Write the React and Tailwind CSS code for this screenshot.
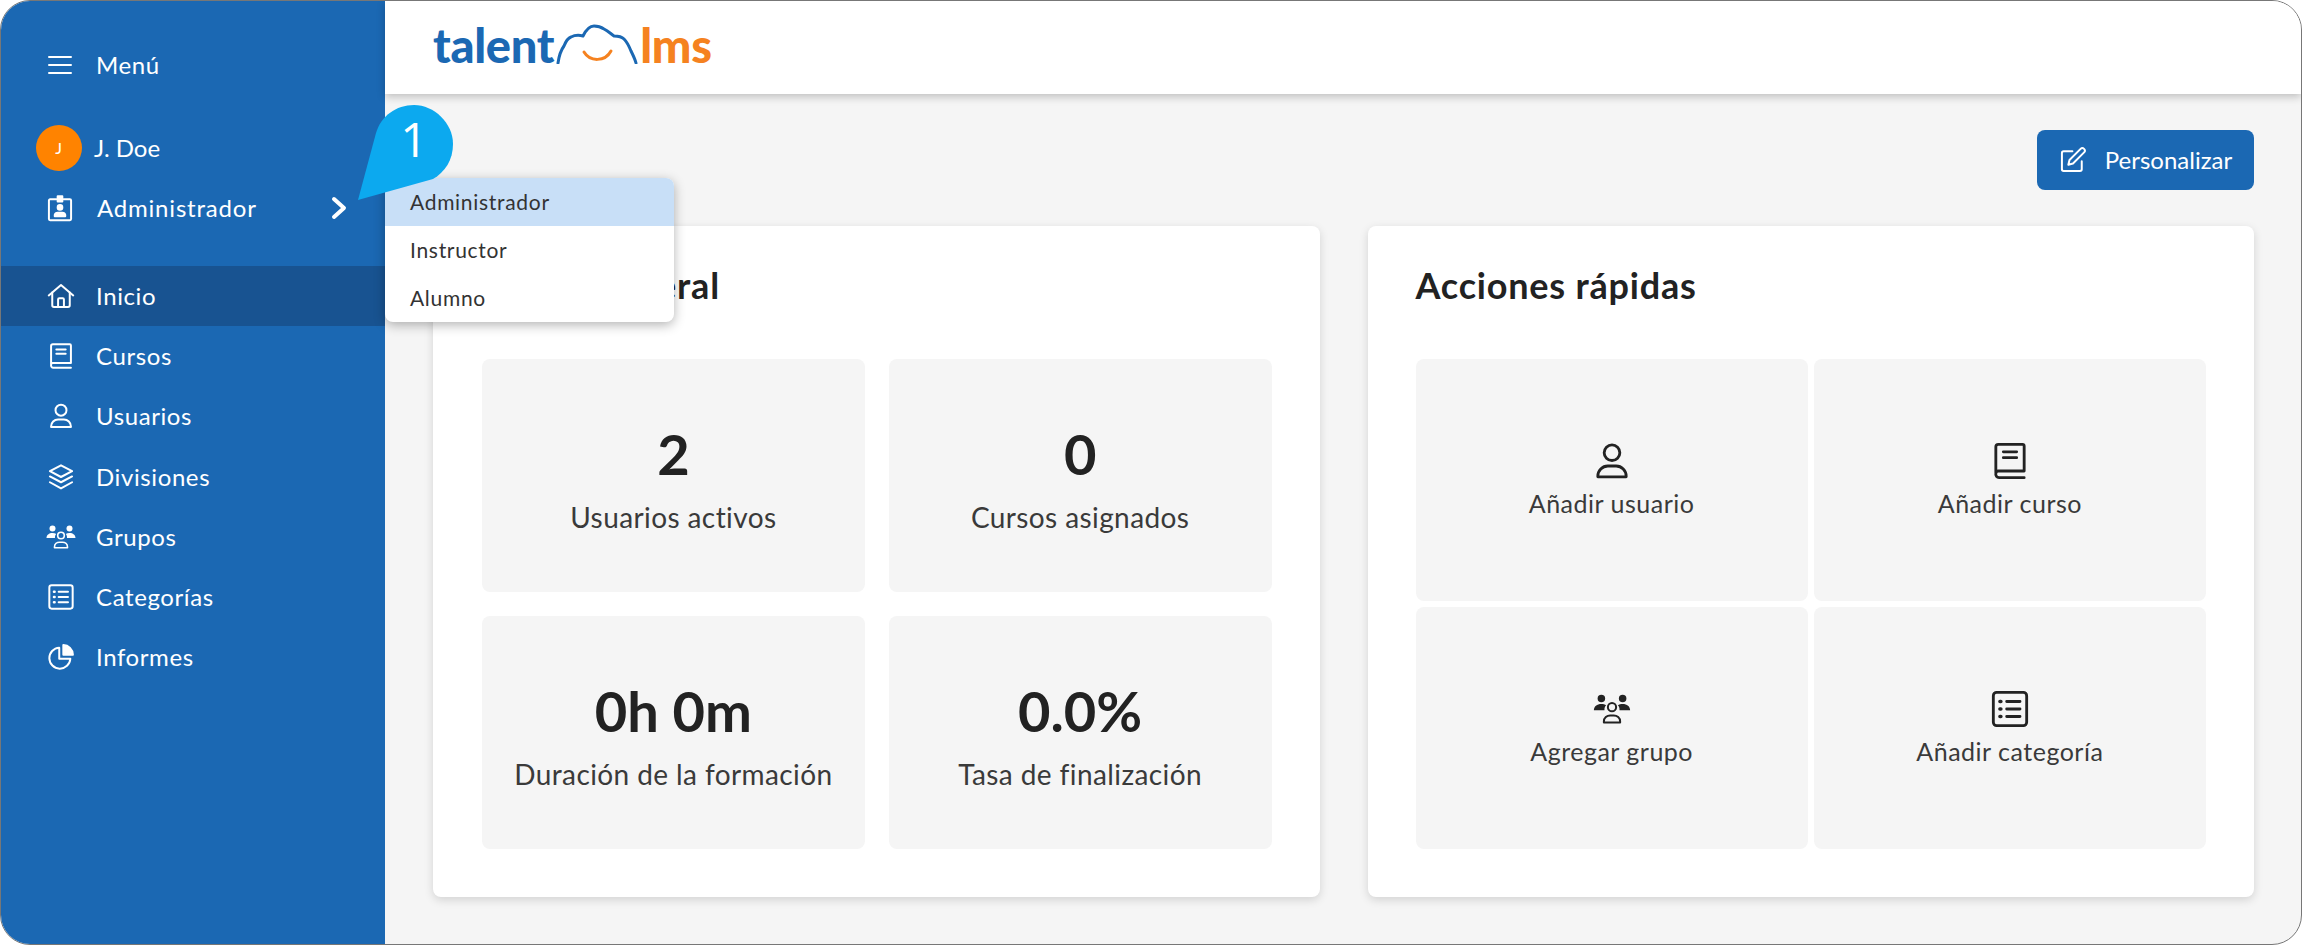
import { useState } from 'react';

const font = { fontFamily: 'Lato, "Noto Sans", sans-serif' };

const IconBase = ({ children, className = 'w-[28px] h-[28px]' }) => (
  <svg viewBox="0 0 24 24" fill="none" stroke="currentColor" strokeWidth="1.7" strokeLinecap="round" strokeLinejoin="round" className={className}>
    {children}
  </svg>
);

const HomeIcon = (p) => (
  <IconBase {...p}>
    <path d="M1.500 11.500 12 2.500l10.500 9" />
    <path d="M4.500 9V20a1.500 1.500 0 0 0 1.500 1.500h12a1.500 1.500 0 0 0 1.500-1.500V9" />
    <path d="M9.500 21.500V15a1 1 0 0 1 1-1h3a1 1 0 0 1 1 1v6.500" />
  </IconBase>
);
const BookIcon = (p) => (
  <IconBase {...p}>
    <path d="M3.500 19V3.500A1.500 1.500 0 0 1 5 2h14.500a1 1 0 0 1 1 1v15H5a1.500 1.500 0 0 0-1.500 1.500A2 2 0 0 0 5.500 22h15" />
    <path d="M8 6.500h8M8 10h8" />
  </IconBase>
);
const UserIcon = (p) => (
  <IconBase {...p}>
    <circle cx="12" cy="7" r="4.700" />
    <path d="M3.500 21.500v-.5A6 6 0 0 1 9.500 15h5a6 6 0 0 1 6 6v.5z" />
  </IconBase>
);
const LayersIcon = (p) => (
  <IconBase {...p}>
    <path d="M12 2 21.500 7 12 12 2.500 7z" />
    <path d="M2.500 11.500 12 16.500l9.500-5" />
    <path d="M2.500 16.500 12 21.800l9.500-5.300" />
  </IconBase>
);
const GroupIcon = ({ className = 'w-[30px] h-[24px]' }) => (
  <svg viewBox="0 0 30 24" fill="currentColor" className={className}>
    <circle cx="6.500" cy="3.500" r="3" />
    <circle cx="23.500" cy="3.500" r="3" />
    <path d="M0.500 13c0-3 2.500-5 6-5 1.500 0 2.800.4 3.800 1-1 1-1.500 2.500-1.300 4z" />
    <path d="M29.500 13c0-3-2.500-5-6-5-1.500 0-2.800.4-3.800 1 1 1 1.500 2.500 1.300 4z" />
    <circle cx="15" cy="10.500" r="3.300" fill="none" stroke="currentColor" strokeWidth="1.600" />
    <path d="M8.500 22.800v-.8c0-3 2.500-4.800 5-4.800h3c2.500 0 5 1.800 5 4.800v.8z" fill="none" stroke="currentColor" strokeWidth="1.600" strokeLinejoin="round" />
  </svg>
);
const ListIcon = (p) => (
  <IconBase {...p}>
    <rect x="2" y="2" width="20" height="20" rx="2" />
    <path d="M10 7.500h8M10 12h8M10 16.500h8" />
    <path d="M6 7.500h.5M6 12h.5M6 16.500h.5" strokeWidth="2.200" />
  </IconBase>
);
const PieIcon = (p) => (
  <IconBase {...p}>
    <path d="M10.500 4a9 9 0 1 0 9.500 9.500h-9.500z" />
    <path d="M14 1.800a8.500 8.500 0 0 1 8.200 8.200H14z" fill="currentColor" />
  </IconBase>
);
const BadgeIcon = (p) => (
  <IconBase {...p}>
    <path d="M9 4.500H3.500a1 1 0 0 0-1 1v16a1 1 0 0 0 1 1h17a1 1 0 0 0 1-1v-16a1 1 0 0 0-1-1H15" />
    <path d="M10 2h4v4.500h-4z" fill="currentColor" />
    <circle cx="12" cy="11.500" r="2" fill="currentColor" />
    <path d="M7.500 19v-1a2.500 2.500 0 0 1 2.500-2h4a2.500 2.500 0 0 1 2.500 2v1z" fill="currentColor" />
  </IconBase>
);
const EditIcon = (p) => (
  <IconBase {...p}>
    <path d="M11.500 4.500H4a1.500 1.500 0 0 0-1.500 1.500v14A1.500 1.500 0 0 0 4 21.500h14a1.500 1.500 0 0 0 1.500-1.500v-7" />
    <path d="M18.500 2.500a2.100 2.100 0 0 1 3 3L12 15l-4 1 1-4z" />
  </IconBase>
);

const Logo = () => (
  <div className="flex items-end h-[40px] leading-none" style={font}>
    <span className="text-[47px] font-black tracking-[-0.3px] text-[#1b68b3] leading-[38px]">talent</span>
    <svg viewBox="0 0 82 40" className="w-[82px] h-[40px] mx-[2px]" fill="none" strokeLinecap="round" strokeLinejoin="round">
      <path d="M2 39c1-7 3-13 6-17 2-5 4-8 7-9 4-2 8-2 12-1C30 6 34 2 38 2c4 0 7 1 10 3 4 2 7 5 10 7 4 0 8 1 10 3 3 3 5 7 7 12 2 4 4 8 5 12" stroke="#1b68b3" strokeWidth="3" />
      <path d="M28 28c6 10 21 10 27-1" stroke="#f58220" strokeWidth="3" />
    </svg>
    <span className="text-[47px] font-black tracking-[-0.3px] text-[#f58220] leading-[38px]">lms</span>
  </div>
);

const navItems = [
  { label: 'Inicio', icon: HomeIcon, active: true },
  { label: 'Cursos', icon: BookIcon },
  { label: 'Usuarios', icon: UserIcon },
  { label: 'Divisiones', icon: LayersIcon },
  { label: 'Grupos', icon: GroupIcon },
  { label: 'Categorías', icon: ListIcon },
  { label: 'Informes', icon: PieIcon },
];

const stats = [
  { value: '2', label: 'Usuarios activos' },
  { value: '0', label: 'Cursos asignados' },
  { value: '0h 0m', label: 'Duración de la formación' },
  { value: '0.0%', label: 'Tasa de finalización' },
];

const actions = [
  { label: 'Añadir usuario', icon: UserIcon },
  { label: 'Añadir curso', icon: BookIcon },
  { label: 'Agregar grupo', icon: GroupIcon },
  { label: 'Añadir categoría', icon: ListIcon },
];

const Sidebar = () => (
  <aside className="w-[384px] shrink-0 bg-[#1b68b3] text-white flex flex-col text-[24px] tracking-[0.6px]">
    <div className="h-[64px] mt-[32px] flex items-center pl-[47px] gap-[24px]">
      <svg viewBox="0 0 24 20" className="w-[24px] h-[20px]" stroke="currentColor" strokeWidth="2" strokeLinecap="round">
        <path d="M1 2h22M1 10h22M1 18h22" />
      </svg>
      <span>Menú</span>
    </div>
    <div className="mt-[28px] flex items-center pl-[35px] gap-[12px] h-[46px]">
      <div className="w-[46px] h-[46px] rounded-full bg-[#ff8300] flex items-center justify-center text-[16px]">J</div>
      <span className="tracking-[0px]">J. Doe</span>
    </div>
    <div className="mt-[14px] h-[46px] flex items-center pl-[45px] pr-[38px]">
      <BadgeIcon />
      <span className="ml-[23px] tracking-[0.8px]">Administrador</span>
      <svg viewBox="0 0 16 24" className="ml-auto w-[16px] h-[24px]" fill="none" stroke="currentColor" strokeWidth="4" strokeLinecap="round" strokeLinejoin="round">
        <path d="M3 3l10 9-10 9" />
      </svg>
    </div>
    <nav className="mt-[35px]">
      {navItems.map(({ label, icon: Icon, active }) => (
        <div key={label} className={`h-[60.200px] flex items-center ${active ? 'bg-[#185391]' : ''}`}>
          <div className="w-[95px] flex justify-center pl-[24px]"><Icon /></div>
          <span>{label}</span>
        </div>
      ))}
    </nav>
  </aside>
);

const StatTile = ({ value, label }) => (
  <div className="bg-[#f5f5f5] rounded-[8px] flex flex-col items-center justify-center pt-[2px]">
    <div className="text-[56px] font-bold leading-[70px] text-[#222]">{value}</div>
    <div className="text-[28px] leading-[36px] text-[#3a3a3a] tracking-[0.4px] mt-[10px]">{label}</div>
  </div>
);

const ActionTile = ({ label, icon: Icon }) => (
  <div className="bg-[#f5f5f5] rounded-[8px] flex flex-col items-center justify-center text-[#222]">
    <Icon className={Icon === GroupIcon ? 'w-[38px] h-[30px] my-[5px]' : 'w-[40px] h-[40px]'} />
    <div className="text-[25px] leading-[32px] text-[#3a3a3a] tracking-[0.5px] mt-[6px]">{label}</div>
  </div>
);

export default function App() {
  const [role] = useState('Administrador');

  return (
    <div className="w-[2302px] h-[945px] bg-white overflow-hidden" style={font}>
      <div className="relative w-full h-full flex overflow-hidden rounded-[30px] border border-[#777] bg-[#f5f5f5]">
        <Sidebar />
        <main className="flex-1 flex flex-col min-w-0">
          <header className="h-[93px] bg-white shadow-[0_3px_8px_rgba(0,0,0,0.22)] flex items-center pl-[48px] pb-[8px] shrink-0">
            <Logo />
          </header>
          <div className="flex-1 pl-[48px] pr-[47px] pt-[36px]">
            <div className="flex justify-end">
              <button className="w-[217px] h-[60px] bg-[#1b68b3] text-white rounded-[8px] flex items-center justify-center gap-[18px] text-[24px]">
                <EditIcon />
                Personalizar
              </button>
            </div>
            <div className="mt-[36px] grid grid-cols-2 gap-[48px] h-[671px]">
              <section className="bg-white rounded-[8px] shadow-[0_3px_10px_rgba(0,0,0,0.14)] pl-[49px] pr-[48px] py-[48px] flex flex-col">
                <h2 className="text-[36px] font-bold text-[#222] tracking-[0.8px] leading-[40px] mt-[-9px] mb-[54px]">Visión general</h2>
                <div className="flex-1 grid grid-cols-2 gap-[24px]">
                  {stats.map((s) => <StatTile key={s.label} {...s} />)}
                </div>
              </section>
              <section className="bg-white rounded-[8px] shadow-[0_3px_10px_rgba(0,0,0,0.14)] p-[48px] flex flex-col">
                <h2 className="text-[36px] font-bold text-[#222] tracking-[0.8px] leading-[40px] mt-[-9px] mb-[54px]">Acciones rápidas</h2>
                <div className="flex-1 grid grid-cols-2 gap-[6px]">
                  {actions.map((a) => <ActionTile key={a.label} {...a} />)}
                </div>
              </section>
            </div>
          </div>
        </main>

        {/* menu de roles */}
        <div className="absolute left-[384px] top-[177px] w-[289px] bg-white rounded-r-[8px] rounded-bl-[8px] shadow-[0_3px_12px_rgba(0,0,0,0.3)] text-[21px] text-[#333] overflow-hidden tracking-[0.7px]">
          {['Administrador', 'Instructor', 'Alumno'].map((r) => (
            <div key={r} className={`h-[48px] flex items-center pl-[25px] ${r === role ? 'bg-[#c8dff7]' : ''}`}>{r}</div>
          ))}
        </div>

        {/* globo numerado */}
        <div className="absolute left-[350px] top-[100px] w-[110px] h-[105px]">
          <svg viewBox="0 0 110 105" className="w-full h-full">
            <path d="M7 99 25 32C30 15 45 4 63 4c20 0 39 18 39 39 0 16-8 28-20 35z" fill="#0ca9ef" />
          </svg>
          <span className="absolute left-[48px] top-[8px] w-[30px] text-center text-[48px] leading-[60px] text-white font-['Open_Sans']">1</span>
        </div>
      </div>
    </div>
  );
}
